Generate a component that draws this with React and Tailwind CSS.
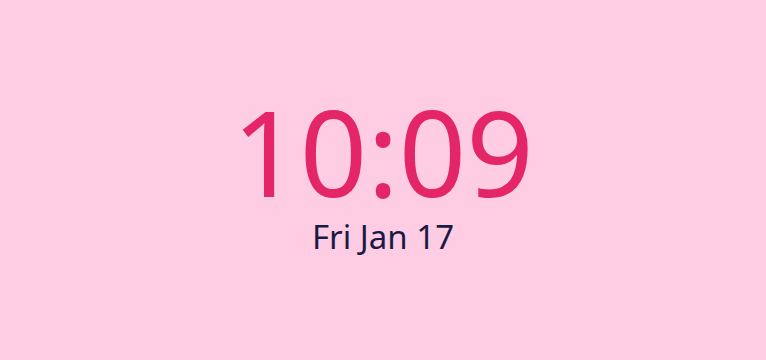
export default function App() {
  return (
    <div className="min-h-screen w-full bg-[#ffcde3] flex flex-col items-center justify-center pb-[12px] font-['Noto_Sans',sans-serif]">
      <div className="text-[118px] leading-[120px] text-[#e42567]">10:09</div>
      <div className="mt-[5px] text-[33px] leading-[40px] text-[#1b1a45]">Fri Jan 17</div>
    </div>
  );
}
